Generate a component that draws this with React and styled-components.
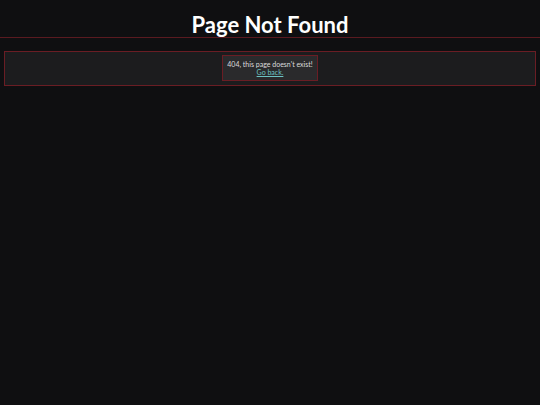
import styled, { createGlobalStyle } from "styled-components"

const Global = createGlobalStyle`
  *, *::before, *::after { box-sizing:border-box; }
  html, body { margin:0; padding:0; background:#0f0f11; }
  body { font-family: Lato, "Open Sans", sans-serif; color:#e8e8e8; }
`

const Header = styled.header`
  height:38px;
  border-bottom:1px solid #5a1a20;
  display:flex;
  align-items:flex-end;
  justify-content:center;
  h1{
    margin:0;
    font-size:22px;
    line-height:24px;
    font-weight:700;
    color:#fff;
  }
`

const Main = styled.main`
  padding:13px 4px;
`

const Panel = styled.section`
  background:#1c1c1e;
  border:1px solid #6a1d24;
  height:35px;
  display:flex;
  justify-content:center;
  align-items:flex-start;
  padding-top:3px;
`

const Notice = styled.div`
  background:#2a2a2c;
  border:1px solid #6a1d24;
  width:96px;
  height:26px;
  display:flex;
  flex-direction:column;
  align-items:center;
  justify-content:center;
  font-size:7px;
  line-height:8.5px;
  color:#ddd;
  a{ color:#6cc2c2; }
`

function App(){
  return(
    <>
      <Global/>
      <Header><h1>Page Not Found</h1></Header>
      <Main>
        <Panel>
          <Notice>
            <span>404, this page doesn't exist!</span>
            <a href="#">Go back.</a>
          </Notice>
        </Panel>
      </Main>
    </>
  )
}
export default App
